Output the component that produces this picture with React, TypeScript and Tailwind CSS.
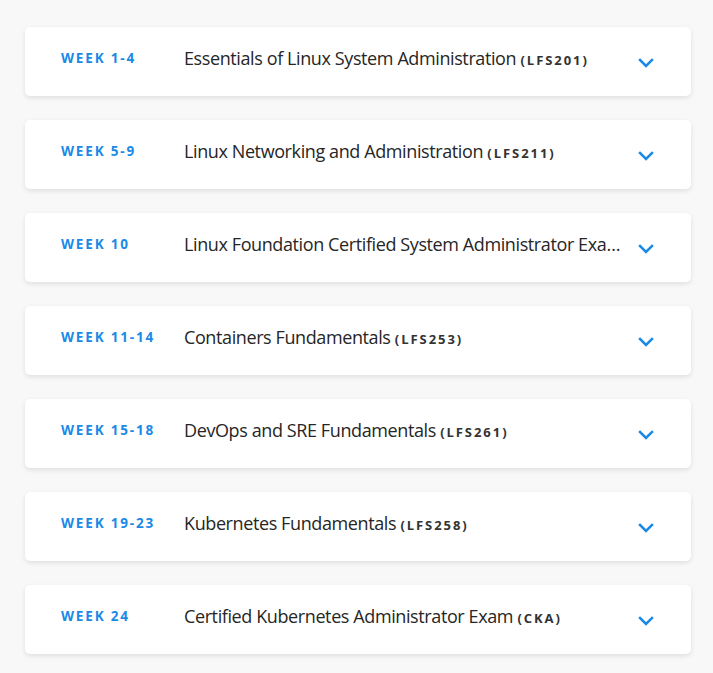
const weeks = [
  { week: "Week 1-4", title: "Essentials of Linux System Administration", code: "(LFS201)" },
  { week: "Week 5-9", title: "Linux Networking and Administration", code: "(LFS211)" },
  { week: "Week 10", title: "Linux Foundation Certified System Administrator Exam", code: "(LFCS)" },
  { week: "Week 11-14", title: "Containers Fundamentals", code: "(LFS253)" },
  { week: "Week 15-18", title: "DevOps and SRE Fundamentals", code: "(LFS261)" },
  { week: "Week 19-23", title: "Kubernetes Fundamentals", code: "(LFS258)" },
  { week: "Week 24", title: "Certified Kubernetes Administrator Exam", code: "(CKA)" },
];

function Chevron() {
  return (
    <svg width="16" height="10" viewBox="0 0 16 10" fill="none" className="shrink-0">
      <path d="M2 2l6 6 6-6" stroke="#1a8ae6" strokeWidth="2.5" strokeLinecap="square" />
    </svg>
  );
}

export default function App() {
  return (
    <div className="min-h-screen bg-[#f8f8f8] px-[25px] pt-[27px] pb-[19px] font-['Open_Sans',sans-serif]">
      <div className="flex flex-col gap-[24px] w-[666px]">
        {weeks.map((w) => (
          <div
            key={w.week}
            className="flex items-center h-[69px] bg-white rounded-[5px] shadow-[0_2px_5px_rgba(0,0,0,0.10)] pl-[36px] pr-[37px]"
          >
            <div className="w-[123px] shrink-0 -mt-[6px] text-[13.5px] font-bold uppercase tracking-[0.135em] text-[#1a8ae6]">
              {w.week}
            </div>
            <div className="flex-1 min-w-0 truncate -mt-[7px] text-[18px] text-[#262626] tracking-[-0.022em]">
              {w.title}{" "}
              <span className="text-[13px] font-bold tracking-[0.15em] text-[#333]">{w.code}</span>
            </div>
            <div className="ml-[17px] mt-[2px]">
              <Chevron />
            </div>
          </div>
        ))}
      </div>
    </div>
  );
}
